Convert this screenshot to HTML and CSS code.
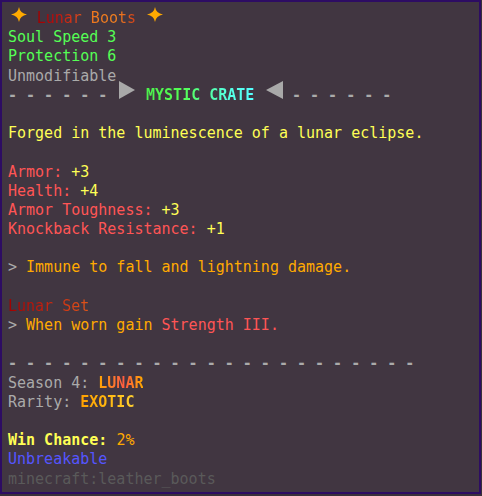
FILE: index.html
```html
<!DOCTYPE html>
<html>
<head>
<meta charset="utf-8">
<link rel="stylesheet" href="styles.css">
</head>
<body>
<div class="tooltip">
  <div class="ln row">
    <svg class="star star-l" viewBox="0 0 16 15" aria-label="✦"><path d="M8 0 Q9 6.3 16 7.5 Q9 8.7 8 15 Q7 8.7 0 7.5 Q7 6.3 8 0Z"/></svg>
    <span class="grad-title">Lunar Boots</span>
    <svg class="star star-r" viewBox="0 0 16 15" aria-label="✦"><path d="M8 0 Q9 6.3 16 7.5 Q9 8.7 8 15 Q7 8.7 0 7.5 Q7 6.3 8 0Z"/></svg>
  </div>
  <div class="ln green">Soul Speed 3</div>
  <div class="ln green">Protection 6</div>
  <div class="ln gray">Unmodifiable</div>
  <div class="ln row">
    <span class="gray dash">- - - - - -</span>
    <svg class="tri tri-r" viewBox="0 0 16 18"><path d="M0 0 L16 9 L0 18Z"/></svg>
    <span class="bold grad-crate crate">MYSTIC CRATE</span>
    <svg class="tri tri-l" viewBox="0 0 17 18"><path d="M17 0 L0 9 L17 18Z"/></svg>
    <span class="gray dash dash-r">- - - - - -</span>
  </div>
  <div class="ln"></div>
  <div class="ln yellow">Forged in the luminescence of a lunar eclipse.</div>
  <div class="ln"></div>
  <div class="ln"><span class="red">Armor: </span><span class="yellow">+3</span></div>
  <div class="ln"><span class="red">Health: </span><span class="yellow">+4</span></div>
  <div class="ln"><span class="red">Armor Toughness: </span><span class="yellow">+3</span></div>
  <div class="ln"><span class="red">Knockback Resistance: </span><span class="yellow">+1</span></div>
  <div class="ln"></div>
  <div class="ln"><span class="gray">&gt; </span><span class="gold">Immune to fall and lightning damage.</span></div>
  <div class="ln"></div>
  <div class="ln"><span class="grad-set">Lunar Set</span></div>
  <div class="ln"><span class="gray">&gt; </span><span class="gold">When worn gain </span><span class="red">Strength III.</span></div>
  <div class="ln"></div>
  <div class="ln gray dash">- - - - - - - - - - - - - - - - - - - - - - -</div>
  <div class="ln"><span class="gray">Season 4: </span><span class="bold grad-lunar">LUNAR</span></div>
  <div class="ln"><span class="gray">Rarity: </span><span class="bold grad-exotic">EXOTIC</span></div>
  <div class="ln"></div>
  <div class="ln"><span class="bold yellow">Win Chance: </span><span class="gold">2%</span></div>
  <div class="ln blue">Unbreakable</div>
  <div class="ln dgray">minecraft:leather_boots</div>
</div>
</body>
</html>
```

FILE: styles.css
```css
html, body {
  margin: 0;
  padding: 0;
  background: #3a303a;
}

.tooltip {
  box-sizing: border-box;
  width: 481px;
  height: 494px;
  border: 2px solid #2d0c63;
  background: #413641;
  padding: 7px 0 0 6px;
  font-family: "DejaVu Sans Mono", "Liberation Mono", monospace;
  font-size: 15px;
  line-height: 19.2px;
}

.ln {
  height: 19.2px;
  white-space: pre;
}

.row {
  display: flex;
  align-items: center;
}

.row > span {
  white-space: pre;
}

.dash {
  font-weight: bold;
}

.star {
  flex: none;
  width: 16px;
  height: 15px;
  fill: #ffaa00;
  margin-bottom: 8px;
}

.star-l {
  margin-left: 3px;
  margin-right: 9.7px;
}

.star-r {
  margin-left: 10.7px;
}

.tri {
  flex: none;
  height: 18px;
  fill: #a9a9a9;
  margin-bottom: 10.5px;
}

.tri-r {
  width: 16px;
  margin-left: 11.7px;
}

.tri-l {
  width: 17px;
  margin-left: 11.6px;
}

.crate {
  margin-left: 11px;
}

.dash-r {
  margin-left: 9px;
}

.bold { font-weight: bold; }
.green { color: #55ff55; }
.gray { color: #aaaaaa; }
.yellow { color: #ffff55; }
.red { color: #ff5555; }
.gold { color: #ffaa00; }
.blue { color: #5555ff; }
.dgray { color: #5a5a5a; }

.grad-title,
.grad-set,
.grad-crate,
.grad-lunar,
.grad-exotic {
  color: transparent;
  -webkit-background-clip: text;
  background-clip: text;
}

.grad-title {
  background-image: linear-gradient(90deg, #a00000 0%, #b80c0c 18%, #d8401a 40%, #f07a1e 58%, #f28020 82%, #d03c18 100%);
}

.grad-set {
  background-image: linear-gradient(90deg, #a00000 0%, #c02010 45%, #e0561a 100%);
}

.grad-crate {
  background-image: linear-gradient(90deg, #4cf04c 0%, #55ff55 35%, #55ff9a 55%, #55ffe0 75%, #55ffff 100%);
}

.grad-lunar {
  background-image: linear-gradient(90deg, #ffaa00 0%, #ff6a3a 45%, #ff5a40 60%, #ffaa00 100%);
}

.grad-exotic {
  background-image: linear-gradient(90deg, #ffa000 0%, #ffb810 50%, #ffd030 100%);
}
```
